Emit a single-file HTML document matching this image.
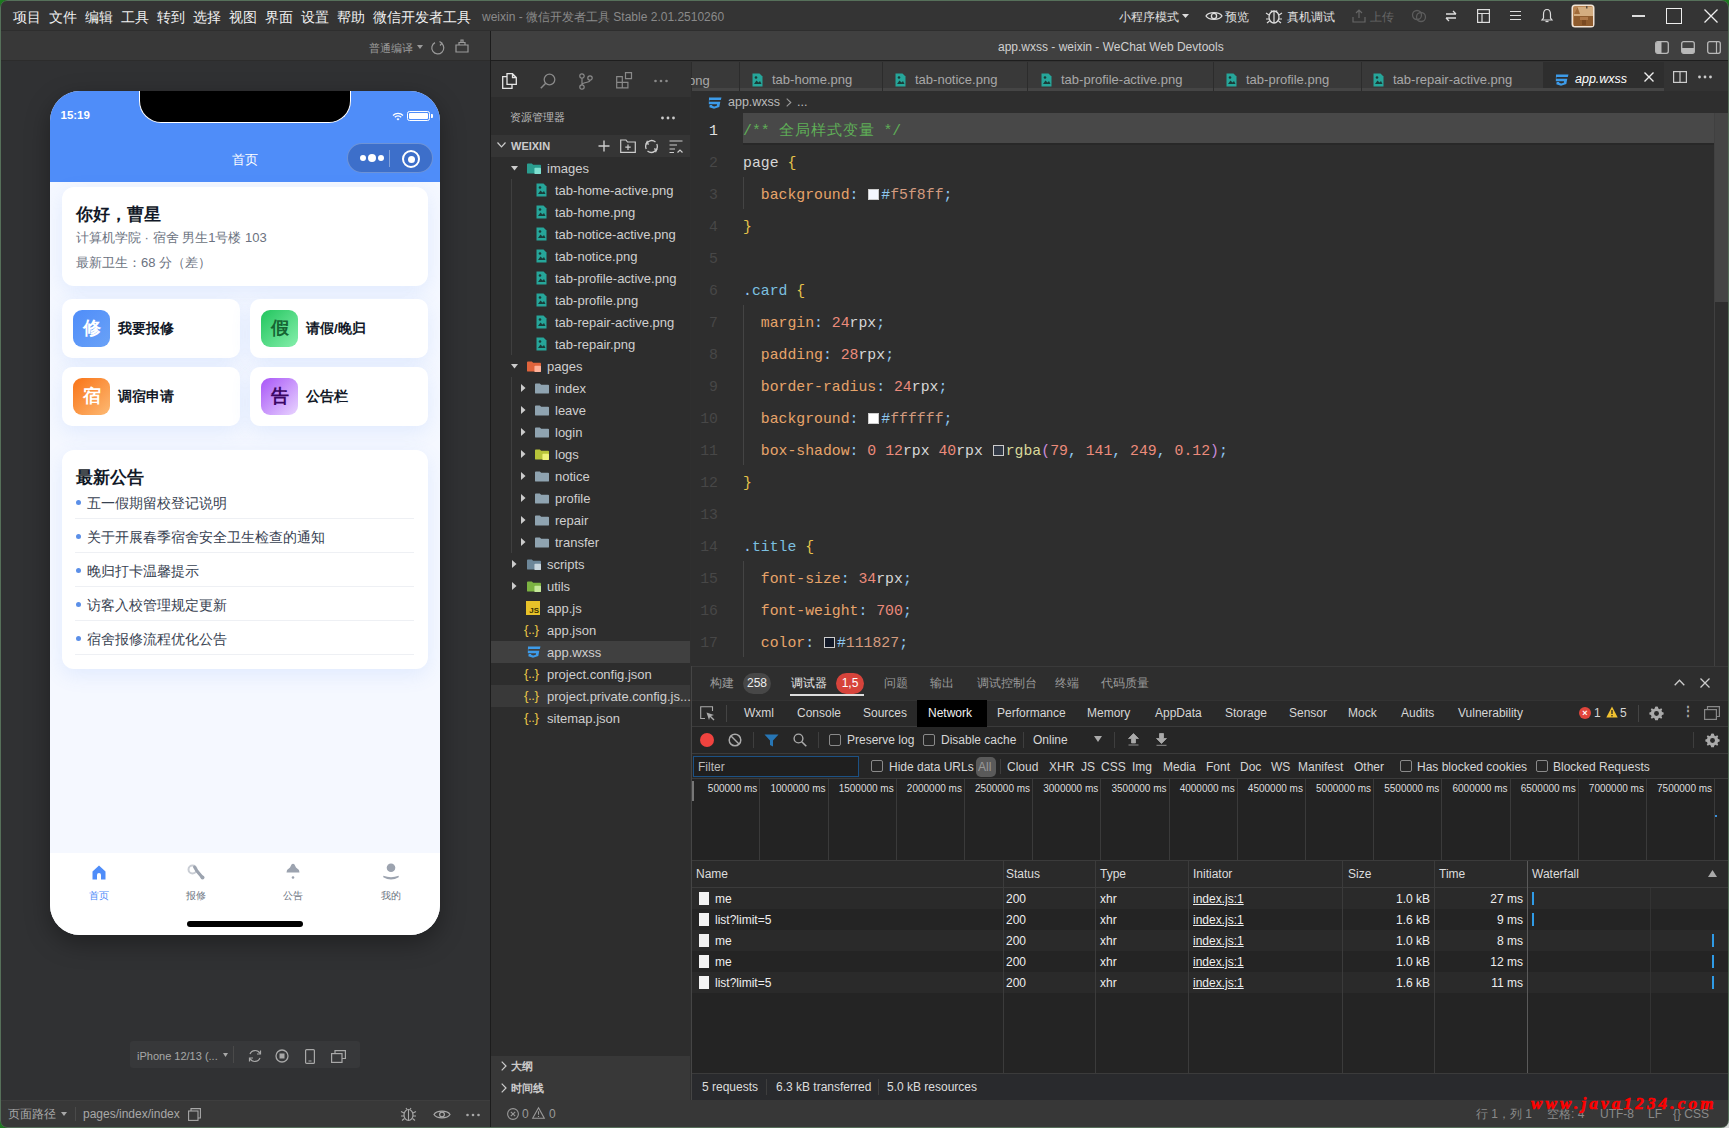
<!DOCTYPE html>
<html><head><meta charset="utf-8">
<style>
*{box-sizing:border-box;margin:0;padding:0}
html,body{width:1729px;height:1128px;overflow:hidden;background:#2f2f2f;font-family:"Liberation Sans",sans-serif;color:#ccc}
.a{position:absolute}
.t{position:absolute;white-space:nowrap;line-height:1}
svg{position:absolute;overflow:visible}
/* menu */
#menubar{left:0;top:0;width:1729px;height:31px;background:#343434;border-bottom:1px solid #2e2e2e}
.menu{top:10.5px;font-size:13.5px;color:#f0f0f0}
/* left sim */
#simtool{left:0;top:31px;width:490px;height:30px;background:#383838;border-bottom:1px solid #2c2c2c}
#simbg{left:0;top:61px;width:490px;height:1039px;background:#303133}
#vsep{left:490px;top:31px;width:1px;height:1097px;background:#1c1c1c}
/* right */
#titlebar{left:491px;top:31px;width:1238px;height:30px;background:#404040;border-bottom:1px solid #1e1e1e}
#actbar{left:491px;top:61px;width:200px;height:36px;background:#333}
#explorer{left:491px;top:97px;width:199px;height:1003px;background:#2d2d2d}
#tabsrow{left:691px;top:61px;width:1038px;height:30px;background:#333}
#editor{left:691px;top:91px;width:1038px;height:575px;background:#2e2e2e}
#devtools{left:691px;top:666px;width:1038px;height:434px;background:#242424}
#status{left:491px;top:1100px;width:1238px;height:28px;background:#373737}
.card{position:absolute;background:#fff;border-radius:12px;box-shadow:0 6px 20px rgba(79,141,249,0.12)}
.ico{width:37px;height:37px;border-radius:9px;color:#fff;font-size:18px;font-weight:bold;text-align:center;line-height:37px}
.qt{font-size:13.5px;font-weight:bold;color:#111827}
.nl{position:absolute;left:25px;width:339px;height:34px;font-size:14px;color:#374151;display:flex;align-items:center;border-bottom:1px solid #eef0f4;white-space:nowrap;padding-top:4px}
.nl i{display:inline-block;width:5px;height:5px;border-radius:3px;background:#5b8fe8;margin:-3px 6px 0 1px;flex:none}
.tl{font-size:10px;color:#6b7280}
.fn{font-size:13px;color:#cfcfcf}
.tabt{font-size:13px;color:#a8a8a8}
.ln{left:0;width:27px;text-align:right;font-family:"Liberation Mono",monospace;font-size:14.8px}
.code{left:52px;font-family:"Liberation Mono",monospace;font-size:14.8px;color:#d7d7d7;white-space:pre}
.sw{display:inline-block;width:11px;height:11px;border:1px solid #ccc;margin:0 2px 0 1px;vertical-align:-1px}
.dt{font-size:12px;color:#d6d6d6}
.cb{width:12px;height:12px;border:1px solid #8a8a8a;border-radius:2px}
.ovl{width:80px;text-align:right;font-size:10px;color:#dedede;padding-right:2px}
.cj{display:inline-block;white-space:nowrap}
</style></head><body>
<div id="menubar" class="a">
<div class="t menu" style="left:13px">项目</div>
<div class="t menu" style="left:49px">文件</div>
<div class="t menu" style="left:85px">编辑</div>
<div class="t menu" style="left:121px">工具</div>
<div class="t menu" style="left:157px">转到</div>
<div class="t menu" style="left:193px">选择</div>
<div class="t menu" style="left:229px">视图</div>
<div class="t menu" style="left:265px">界面</div>
<div class="t menu" style="left:301px">设置</div>
<div class="t menu" style="left:337px">帮助</div>
<div class="t menu" style="left:373px">微信开发者工具</div>
<div class="t" style="left:482px;top:10.5px;font-size:12px;color:#8a8a8a">weixin - <span class="cj" style="width:7em">微信开发者工具</span> Stable 2.01.2510260</div>
<div class="t" style="left:1119px;top:11px;font-size:12px;color:#e0e0e0">小程序模式</div>
<svg style="left:1182px;top:14px" width="8" height="5"><path d="M0 0H7L3.5 4Z" fill="#ddd"/></svg>
<svg style="left:1205px;top:9px" width="18" height="14" viewBox="0 0 18 14"><path d="M1 7C3.5 2.5 14.5 2.5 17 7C14.5 11.5 3.5 11.5 1 7Z" fill="none" stroke="#ddd" stroke-width="1.3"/><circle cx="9" cy="7" r="2.6" fill="none" stroke="#ddd" stroke-width="1.3"/></svg>
<div class="t" style="left:1225px;top:11px;font-size:12px;color:#e0e0e0">预览</div>
<svg style="left:1265px;top:8px" width="18" height="16" viewBox="0 0 18 16"><ellipse cx="9" cy="9" rx="5" ry="6" fill="none" stroke="#ddd" stroke-width="1.3"/><path d="M9 3V15M1 5L4 7M17 5L14 7M1 11H4M17 11H14M2 15L4.5 13M16 15L13.5 13M6 2.5L7 4M12 2.5L11 4" stroke="#ddd" stroke-width="1.2"/></svg>
<div class="t" style="left:1287px;top:11px;font-size:12px;color:#e0e0e0">真机调试</div>
<svg style="left:1352px;top:9px" width="14" height="14" viewBox="0 0 14 14"><path d="M7 1V9M4 4L7 1L10 4M1 8V13H13V8" fill="none" stroke="#666" stroke-width="1.2"/></svg>
<div class="t" style="left:1370px;top:11px;font-size:12px;color:#666">上传</div>
<svg style="left:1411px;top:10px" width="16" height="12" viewBox="0 0 16 12"><circle cx="6" cy="5" r="4.5" fill="none" stroke="#5c5c5c" stroke-width="1.3"/><circle cx="10" cy="7" r="4.5" fill="none" stroke="#5c5c5c" stroke-width="1.3"/></svg>
<svg style="left:1445px;top:10px" width="12" height="12" viewBox="0 0 12 12"><path d="M1 4H11M8 1L11 4M11 8H1M4 11L1 8" fill="none" stroke="#ddd" stroke-width="1.3"/></svg>
<svg style="left:1477px;top:9px" width="13" height="14" viewBox="0 0 13 14"><rect x="0.6" y="0.6" width="11.8" height="12.8" fill="none" stroke="#ddd" stroke-width="1.2"/><path d="M0.6 4.5H12.4M5 4.5V13.4" stroke="#ddd" stroke-width="1.2"/></svg>
<svg style="left:1510px;top:10px" width="11" height="11" viewBox="0 0 11 11"><path d="M0 1.5H11M0 5.5H11M0 9.5H11" stroke="#ddd" stroke-width="1.2"/></svg>
<svg style="left:1541px;top:8px" width="12" height="15" viewBox="0 0 12 15"><path d="M6 1.5C3 1.5 2.5 4 2.5 6.5V10L1 12H11L9.5 10V6.5C9.5 4 9 1.5 6 1.5Z" fill="none" stroke="#ddd" stroke-width="1.2"/><path d="M4.5 13.5H7.5" stroke="#ddd" stroke-width="1.3"/></svg>
<svg style="left:1571px;top:4px" width="24" height="24" viewBox="0 0 24 24"><rect x="0.5" y="0.5" width="23" height="23" rx="3.5" fill="#f2e4d6"/><rect x="2" y="2" width="20" height="20" rx="2" fill="#b98452"/><path d="M3 10L6.5 3H22V12H3Z" fill="#d4ad80"/><path d="M3 10L6.5 3L9 10Z" fill="#a06a38"/><rect x="15" y="2" width="1.5" height="2.5" fill="#5a4a3a"/><rect x="3" y="12" width="19" height="10" fill="#8f5c2e"/><rect x="9" y="13" width="8" height="3" fill="#b07a4a"/><rect x="11" y="16" width="4" height="5" fill="#7a4a22"/></svg>
<div class="a" style="left:1632px;top:15px;width:13px;height:1.5px;background:#ddd"></div>
<div class="a" style="left:1666px;top:8px;width:16px;height:16px;border:1.5px solid #eee"></div>
<svg style="left:1704px;top:9px" width="14" height="14" viewBox="0 0 14 14"><path d="M0.5 0.5L13.5 13.5M13.5 0.5L0.5 13.5" stroke="#eee" stroke-width="1.3"/></svg>
</div>
<div id="simtool" class="a">
<div class="t" style="left:369px;top:11.5px;font-size:11px;color:#9a9a9a">普通编译</div>
<svg style="left:417px;top:14px" width="6" height="4"><path d="M0 0H6L3 4Z" fill="#9a9a9a"/></svg>
<svg style="left:431px;top:10px" width="14" height="14" viewBox="0 0 14 14"><path d="M10.5 2.2A6 6 0 1 1 4 1.6" fill="none" stroke="#9a9a9a" stroke-width="1.2"/><path d="M8.5 0.5L11 2.2L9 4.5" fill="none" stroke="#9a9a9a" stroke-width="1.2"/></svg>
<svg style="left:455px;top:8px" width="14" height="14" viewBox="0 0 14 14"><path d="M1 6H13V13H1Z M4 6V3.5H10V6 M6 3.5V1H8V3.5" fill="none" stroke="#9a9a9a" stroke-width="1.2"/></svg>
</div>
<div id="simbg" class="a"></div>
<div class="a" style="left:50px;top:91px;width:390px;height:844px;border-radius:30px;background:#f5f8ff;overflow:hidden;box-shadow:0 8px 24px rgba(0,0,0,0.35)">
  <div class="a" style="left:0;top:0;width:390px;height:91px;background:#4f8df9"></div>
  <div class="a" style="left:89px;top:-1px;width:212px;height:33px;background:#000;border:1px solid #fff;border-top:none;border-radius:0 0 22px 22px"></div>
  <div class="t" style="left:10.5px;top:18.5px;font-size:11.5px;font-weight:bold;color:#fff">15:19</div>
  <svg style="left:342px;top:21px" width="12" height="9" viewBox="0 0 12 9"><path d="M1 3.5A7 7 0 0 1 11 3.5M2.8 5.3A4.5 4.5 0 0 1 9.2 5.3" fill="none" stroke="#fff" stroke-width="1.3"/><path d="M4.5 7L6 8.6L7.5 7A2.2 2.2 0 0 0 4.5 7Z" fill="#fff"/></svg>
  <div class="a" style="left:357px;top:20px;width:23px;height:10px;border:1.3px solid #fff;border-radius:2.5px;padding:1px"><div style="width:100%;height:100%;background:#fff;border-radius:1px"></div></div>
  <div class="a" style="left:381px;top:23px;width:2px;height:4px;background:#fff;border-radius:0 1px 1px 0"></div>
  <div class="t" style="left:182px;top:62px;font-size:13px;color:#fff">首页</div>
  <div class="a" style="left:297px;top:52px;width:86px;height:30px;border-radius:15px;background:#3d6fca;border:1px solid rgba(255,255,255,0.25)"></div>
  <div class="a" style="left:339px;top:59px;width:1px;height:17px;background:rgba(255,255,255,0.35)"></div>
  <div class="a" style="left:310px;top:64px;width:6px;height:6px;border-radius:3px;background:#fff"></div>
  <div class="a" style="left:318px;top:63px;width:8px;height:8px;border-radius:4px;background:#fff"></div>
  <div class="a" style="left:328px;top:64px;width:6px;height:6px;border-radius:3px;background:#fff"></div>
  <div class="a" style="left:352px;top:59px;width:18px;height:18px;border-radius:9px;border:2px solid #fff"></div>
  <div class="a" style="left:357.5px;top:64.5px;width:7px;height:7px;border-radius:4px;background:#fff"></div>

  <div class="a card" style="left:12px;top:96px;width:366px;height:99px"></div>
  <div class="t" style="left:26px;top:115px;font-size:16.5px;font-weight:bold;color:#111827">你好，曹星</div>
  <div class="t" style="left:26px;top:140px;font-size:13px;color:#6b7280"><span class="cj" style="width:5em">计算机学院</span> · <span class="cj" style="width:2em">宿舍</span> <span class="cj" style="width:2em">男生</span>1<span class="cj" style="width:2em">号楼</span> 103</div>
  <div class="t" style="left:26px;top:165px;font-size:13px;color:#6b7280"><span class="cj" style="width:5em">最新卫生：</span>68 <span class="cj" style="width:4em">分（差）</span></div>

  <div class="a card" style="left:12px;top:208px;width:178px;height:59px;border-radius:10px"></div>
  <div class="a card" style="left:200px;top:208px;width:178px;height:59px;border-radius:10px"></div>
  <div class="a card" style="left:12px;top:276px;width:178px;height:59px;border-radius:10px"></div>
  <div class="a card" style="left:200px;top:276px;width:178px;height:59px;border-radius:10px"></div>
  <div class="a ico" style="left:23px;top:219px;background:linear-gradient(135deg,#4f8df9,#6aa2f7)">修</div>
  <div class="a ico" style="left:211px;top:219px;background:linear-gradient(135deg,#22c55e,#86efac);color:#166534">假</div>
  <div class="a ico" style="left:23px;top:287px;background:linear-gradient(135deg,#f97316,#fdba74)">宿</div>
  <div class="a ico" style="left:211px;top:287px;background:linear-gradient(135deg,#a855f7,#e9d5ff);color:#3b0764">告</div>
  <div class="t qt" style="left:68px;top:231px">我要报修</div>
  <div class="t qt" style="left:256px;top:231px"><span class="cj" style="width:28px">请假</span>/<span class="cj" style="width:28px">晚归</span></div>
  <div class="t qt" style="left:68px;top:299px">调宿申请</div>
  <div class="t qt" style="left:256px;top:299px">公告栏</div>

  <div class="a card" style="left:12px;top:359px;width:366px;height:219px"></div>
  <div class="t" style="left:26px;top:378px;font-size:16.5px;font-weight:bold;color:#111827">最新公告</div>
  <div class="nl" style="top:394px"><i></i>五一假期留校登记说明</div>
  <div class="nl" style="top:428px"><i></i>关于开展春季宿舍安全卫生检查的通知</div>
  <div class="nl" style="top:462px"><i></i>晚归打卡温馨提示</div>
  <div class="nl" style="top:496px"><i></i>访客入校管理规定更新</div>
  <div class="nl" style="top:530px"><i></i>宿舍报修流程优化公告</div>

  <div class="a" style="left:0;top:762px;width:390px;height:82px;background:#fff"></div>
  <svg style="left:42px;top:774px" width="14" height="15" viewBox="0 0 14 15"><path d="M7 0.5L13.5 6.5V14.5H9V10A2 2 0 0 0 5 10V14.5H0.5V6.5Z" fill="#4f8df9"/></svg>
  <svg style="left:137px;top:773px" width="18" height="16" viewBox="0 0 18 16"><circle cx="5.5" cy="5.5" r="4" fill="none" stroke="#c9cdd4" stroke-width="2"/><path d="M7.5 3L10 7L15 13" fill="none" stroke="#9ca3af" stroke-width="3" stroke-linecap="round"/><circle cx="15.5" cy="13.5" r="2" fill="#9ca3af"/></svg>
  <svg style="left:236px;top:772px" width="14" height="17" viewBox="0 0 14 17"><path d="M5.5 1.5Q7 0 8.5 1.5L10 4.5Q13 6 13.5 9.5H0.5Q1 6 4 4.5Z" fill="#9ca3af"/><circle cx="7" cy="14.5" r="1.3" fill="#9ca3af"/></svg>
  <svg style="left:333px;top:772px" width="16" height="18" viewBox="0 0 16 18"><circle cx="8" cy="4.8" r="4.3" fill="#9ca3af"/><path d="M0.3 12.8Q8 15.5 15.7 12.8V14.3Q8 18.8 0.3 14.3Z" fill="#9ca3af"/></svg>
  <div class="t tl" style="left:39px;top:800px;color:#4f8df9">首页</div>
  <div class="t tl" style="left:136px;top:800px">报修</div>
  <div class="t tl" style="left:233px;top:800px">公告</div>
  <div class="t tl" style="left:331px;top:800px">我的</div>
  <div class="a" style="left:137px;top:830px;width:116px;height:5.5px;border-radius:3px;background:#000"></div>
</div>
<div class="a" style="left:130px;top:1041px;width:230px;height:27px;background:#37383a;border-radius:3px"></div>
<div class="t" style="left:137px;top:1051px;font-size:11px;color:#a8a8a8">iPhone 12/13 (...</div>
<svg style="left:223px;top:1053px" width="5" height="5"><path d="M0 0H5L2.5 4Z" fill="#a8a8a8"/></svg>
<div class="a" style="left:233px;top:1046px;width:1px;height:17px;background:#4a4a4a"></div>
<svg style="left:248px;top:1049px" width="14" height="14" viewBox="0 0 14 14"><path d="M12 4.5A5.5 5.5 0 0 0 2 5M2 9.5A5.5 5.5 0 0 0 12 9" fill="none" stroke="#a8a8a8" stroke-width="1.2"/><path d="M12.5 1.5V5H9M1.5 12.5V9H5" fill="none" stroke="#a8a8a8" stroke-width="1.2"/></svg>
<svg style="left:275px;top:1049px" width="14" height="14" viewBox="0 0 14 14"><circle cx="7" cy="7" r="6" fill="none" stroke="#a8a8a8" stroke-width="1.3"/><rect x="4.5" y="4.5" width="5" height="5" fill="#a8a8a8"/></svg>
<svg style="left:305px;top:1049px" width="10" height="15" viewBox="0 0 10 15"><rect x="0.6" y="0.6" width="8.8" height="13.8" rx="1" fill="none" stroke="#a8a8a8" stroke-width="1.2"/><path d="M3.5 12H6.5" stroke="#a8a8a8"/></svg>
<svg style="left:331px;top:1050px" width="15" height="13" viewBox="0 0 15 13"><path d="M4 3V0.6H14.4V8.5H11" fill="none" stroke="#a8a8a8" stroke-width="1.2"/><rect x="0.6" y="3.6" width="10.4" height="8.8" fill="none" stroke="#a8a8a8" stroke-width="1.2"/></svg>
<div class="a" style="left:0;top:1100px;width:490px;height:28px;background:#383838;border-top:1px solid #3e3e3e"></div>
<div class="t" style="left:8px;top:1108px;font-size:12px;color:#a8a8a8">页面路径</div>
<svg style="left:61px;top:1112px" width="6" height="4"><path d="M0 0H6L3 4Z" fill="#a8a8a8"/></svg>
<div class="a" style="left:75px;top:1107px;width:1px;height:14px;background:#4a4a4a"></div>
<div class="t" style="left:83px;top:1108px;font-size:12px;color:#a8a8a8">pages/index/index</div>
<svg style="left:188px;top:1108px" width="13" height="13" viewBox="0 0 13 13"><path d="M3 3V0.6H12.4V10H10" fill="none" stroke="#a8a8a8" stroke-width="1.1"/><rect x="0.6" y="3" width="9.4" height="9.4" fill="none" stroke="#a8a8a8" stroke-width="1.1"/></svg>
<svg style="left:400px;top:1106px" width="17" height="16" viewBox="0 0 17 16"><ellipse cx="8.5" cy="9" rx="4.5" ry="5.5" fill="none" stroke="#a8a8a8" stroke-width="1.2"/><path d="M8.5 3.5V14.5M1 5.5L4 7M16 5.5L13 7M1 10H4M16 10H13M2 14.5L4.5 12.5M15 14.5L12.5 12.5M6 2L7 3.5M11 2L10 3.5" stroke="#a8a8a8" stroke-width="1.1"/></svg>
<svg style="left:433px;top:1109px" width="18" height="11" viewBox="0 0 18 11"><path d="M1 5.5C3.5 1 14.5 1 17 5.5C14.5 10 3.5 10 1 5.5Z" fill="none" stroke="#a8a8a8" stroke-width="1.2"/><circle cx="9" cy="5.5" r="2.4" fill="none" stroke="#a8a8a8" stroke-width="1.2"/></svg>
<svg style="left:466px;top:1113px" width="16" height="4" viewBox="0 0 16 4"><circle cx="1.5" cy="2" r="1.3" fill="#a8a8a8"/><circle cx="7.0" cy="2" r="1.3" fill="#a8a8a8"/><circle cx="12.5" cy="2" r="1.3" fill="#a8a8a8"/></svg>
<div id="vsep" class="a"></div>
<div id="titlebar" class="a">
<div class="t" style="left:507px;top:10px;font-size:12px;color:#d0d0d0">app.wxss - weixin - WeChat Web Devtools</div>
<svg style="left:1164px;top:10px" width="14" height="13" viewBox="0 0 14 13"><rect x="0.7" y="0.7" width="12.6" height="11.6" rx="2" fill="none" stroke="#b8b8b8" stroke-width="1.3"/><path d="M1 2.5Q1 1 2.5 1H6.5V12H2.5Q1 12 1 10.5Z" fill="#b8b8b8"/></svg>
<svg style="left:1190px;top:10px" width="14" height="13" viewBox="0 0 14 13"><rect x="0.7" y="0.7" width="12.6" height="11.6" rx="2" fill="none" stroke="#b8b8b8" stroke-width="1.3"/><path d="M1 7H13V10.5Q13 12 11.5 12H2.5Q1 12 1 10.5Z" fill="#b8b8b8"/></svg>
<svg style="left:1216px;top:10px" width="14" height="13" viewBox="0 0 14 13"><rect x="0.7" y="0.7" width="12.6" height="11.6" rx="2" fill="none" stroke="#b8b8b8" stroke-width="1.3"/><path d="M9.5 1V12" stroke="#b8b8b8" stroke-width="1.2"/></svg>
</div>
<div id="actbar" class="a">
<svg style="left:11px;top:12px" width="15" height="16" viewBox="0 0 15 16"><path d="M5 0.7H10.5L14.3 4.5V11.3H5Z M10.5 0.7V4.5H14.3" fill="none" stroke="#e6e6e6" stroke-width="1.3"/><path d="M5 3.7H0.7V15.3H10V11.3" fill="none" stroke="#e6e6e6" stroke-width="1.3"/></svg>
<svg style="left:49px;top:12px" width="16" height="16" viewBox="0 0 16 16"><circle cx="9.5" cy="6.5" r="5.3" fill="none" stroke="#8a8a8a" stroke-width="1.3"/><path d="M5.7 10.3L0.8 15.2" stroke="#8a8a8a" stroke-width="1.5"/></svg>
<svg style="left:88px;top:12px" width="14" height="17" viewBox="0 0 14 17"><circle cx="3" cy="3" r="2.2" fill="none" stroke="#8a8a8a" stroke-width="1.2"/><circle cx="3" cy="14" r="2.2" fill="none" stroke="#8a8a8a" stroke-width="1.2"/><circle cx="11" cy="5" r="2.2" fill="none" stroke="#8a8a8a" stroke-width="1.2"/><path d="M3 5.2V11.8M11 7.2C11 10 3 9 3 11.8" fill="none" stroke="#8a8a8a" stroke-width="1.2"/></svg>
<svg style="left:125px;top:11px" width="17" height="17" viewBox="0 0 17 17"><path d="M0.7 4.7H6.3V10.3H0.7Z M0.7 10.3H6.3V15.9H0.7Z M6.3 10.3H11.9V15.9H6.3Z M9.5 0.7H15.5V6.7H9.5Z" fill="none" stroke="#8a8a8a" stroke-width="1.2"/></svg>
<svg style="left:163px;top:18px" width="16" height="4" viewBox="0 0 16 4"><circle cx="1.5" cy="2" r="1.3" fill="#8a8a8a"/><circle cx="7.0" cy="2" r="1.3" fill="#8a8a8a"/><circle cx="12.5" cy="2" r="1.3" fill="#8a8a8a"/></svg>
</div>
<div id="explorer" class="a">
<div class="t" style="left:19px;top:15px;font-size:11px;color:#bbb">资源管理器</div>
<svg style="left:170px;top:19px" width="16" height="4" viewBox="0 0 16 4"><circle cx="1.5" cy="2" r="1.4" fill="#cccccc"/><circle cx="7.0" cy="2" r="1.4" fill="#cccccc"/><circle cx="12.5" cy="2" r="1.4" fill="#cccccc"/></svg>
<div class="a" style="left:0;top:38px;width:199px;height:22px;background:#353535"></div>
<svg style="left:6px;top:45px" width="9" height="6" viewBox="0 0 9 6"><path d="M0.5 0.5L4.5 4.8L8.5 0.5" fill="none" stroke="#ccc" stroke-width="1.2"/></svg>
<div class="t" style="left:20px;top:44px;font-size:11px;font-weight:bold;color:#ccc">WEIXIN</div>
<svg style="left:107px;top:43px" width="12" height="12" viewBox="0 0 12 12"><path d="M6 0.5V11.5M0.5 6H11.5" stroke="#ccc" stroke-width="1.4"/></svg>
<svg style="left:129px;top:42px" width="16" height="14" viewBox="0 0 16 14"><path d="M0.7 1H6L7.5 3H15.3V13.3H0.7Z" fill="none" stroke="#ccc" stroke-width="1.2"/><path d="M8 5.5V11M5.3 8.2H10.7" stroke="#ccc" stroke-width="1.2"/></svg>
<svg style="left:153px;top:42px" width="15" height="15" viewBox="0 0 15 15"><path d="M11.5 3A6 6 0 0 0 2.2 10M3.5 12A6 6 0 0 0 12.8 5" fill="none" stroke="#ccc" stroke-width="1.3"/><path d="M3.5 1.8L2.2 4.5L5 5.2M11.5 13.2L12.8 10.5L10 9.8" fill="none" stroke="#ccc" stroke-width="1.2"/></svg>
<svg style="left:178px;top:43px" width="14" height="13" viewBox="0 0 14 13"><path d="M0.5 1H13.5M0.5 5H8M0.5 9H6M0.5 12.5H5" stroke="#ccc" stroke-width="1.2"/><path d="M8.5 12.5L11 10L13.5 12.5" fill="none" stroke="#ccc" stroke-width="1.2"/></svg>

<div class="a" style="left:20px;top:280px;width:1px;height:176px;background:#3f3f3f"></div>
<div class="a" style="left:20px;top:82px;width:1px;height:176px;background:#3f3f3f"></div>
<svg style="left:20px;top:69px" width="7" height="5"><path d="M0 0H7L3.5 4.5Z" fill="#ccc"/></svg>
<svg style="left:36px;top:66px" width="14" height="11" viewBox="0 0 16 13" preserveAspectRatio="none"><path d="M0 1.5Q0 0.5 1 0.5H5.5L7 2H15Q16 2 16 3V11.5Q16 12.5 15 12.5H1Q0 12.5 0 11.5Z" fill="#2a9d8f"/><rect x="8.5" y="5.5" width="7.5" height="7.5" rx="1" fill="#7ee0d0"/></svg>
<div class="t fn" style="left:56px;top:65px">images</div>
<svg style="left:45px;top:86px" width="11" height="14" viewBox="0 0 11 14"><path d="M0.5 0.5H7.5L10.5 3.5V13.5H0.5Z" fill="#26a69a"/><path d="M2 11L4.5 7.5L6.5 9.5L8 8L9.5 11Z" fill="#1b3b38"/><circle cx="4" cy="4.5" r="1.3" fill="#1b3b38"/></svg>
<div class="t fn" style="left:64px;top:87px">tab-home-active.png</div>
<svg style="left:45px;top:108px" width="11" height="14" viewBox="0 0 11 14"><path d="M0.5 0.5H7.5L10.5 3.5V13.5H0.5Z" fill="#26a69a"/><path d="M2 11L4.5 7.5L6.5 9.5L8 8L9.5 11Z" fill="#1b3b38"/><circle cx="4" cy="4.5" r="1.3" fill="#1b3b38"/></svg>
<div class="t fn" style="left:64px;top:109px">tab-home.png</div>
<svg style="left:45px;top:130px" width="11" height="14" viewBox="0 0 11 14"><path d="M0.5 0.5H7.5L10.5 3.5V13.5H0.5Z" fill="#26a69a"/><path d="M2 11L4.5 7.5L6.5 9.5L8 8L9.5 11Z" fill="#1b3b38"/><circle cx="4" cy="4.5" r="1.3" fill="#1b3b38"/></svg>
<div class="t fn" style="left:64px;top:131px">tab-notice-active.png</div>
<svg style="left:45px;top:152px" width="11" height="14" viewBox="0 0 11 14"><path d="M0.5 0.5H7.5L10.5 3.5V13.5H0.5Z" fill="#26a69a"/><path d="M2 11L4.5 7.5L6.5 9.5L8 8L9.5 11Z" fill="#1b3b38"/><circle cx="4" cy="4.5" r="1.3" fill="#1b3b38"/></svg>
<div class="t fn" style="left:64px;top:153px">tab-notice.png</div>
<svg style="left:45px;top:174px" width="11" height="14" viewBox="0 0 11 14"><path d="M0.5 0.5H7.5L10.5 3.5V13.5H0.5Z" fill="#26a69a"/><path d="M2 11L4.5 7.5L6.5 9.5L8 8L9.5 11Z" fill="#1b3b38"/><circle cx="4" cy="4.5" r="1.3" fill="#1b3b38"/></svg>
<div class="t fn" style="left:64px;top:175px">tab-profile-active.png</div>
<svg style="left:45px;top:196px" width="11" height="14" viewBox="0 0 11 14"><path d="M0.5 0.5H7.5L10.5 3.5V13.5H0.5Z" fill="#26a69a"/><path d="M2 11L4.5 7.5L6.5 9.5L8 8L9.5 11Z" fill="#1b3b38"/><circle cx="4" cy="4.5" r="1.3" fill="#1b3b38"/></svg>
<div class="t fn" style="left:64px;top:197px">tab-profile.png</div>
<svg style="left:45px;top:218px" width="11" height="14" viewBox="0 0 11 14"><path d="M0.5 0.5H7.5L10.5 3.5V13.5H0.5Z" fill="#26a69a"/><path d="M2 11L4.5 7.5L6.5 9.5L8 8L9.5 11Z" fill="#1b3b38"/><circle cx="4" cy="4.5" r="1.3" fill="#1b3b38"/></svg>
<div class="t fn" style="left:64px;top:219px">tab-repair-active.png</div>
<svg style="left:45px;top:240px" width="11" height="14" viewBox="0 0 11 14"><path d="M0.5 0.5H7.5L10.5 3.5V13.5H0.5Z" fill="#26a69a"/><path d="M2 11L4.5 7.5L6.5 9.5L8 8L9.5 11Z" fill="#1b3b38"/><circle cx="4" cy="4.5" r="1.3" fill="#1b3b38"/></svg>
<div class="t fn" style="left:64px;top:241px">tab-repair.png</div>
<svg style="left:20px;top:267px" width="7" height="5"><path d="M0 0H7L3.5 4.5Z" fill="#ccc"/></svg>
<svg style="left:36px;top:264px" width="14" height="11" viewBox="0 0 16 13" preserveAspectRatio="none"><path d="M0 1.5Q0 0.5 1 0.5H5.5L7 2H15Q16 2 16 3V11.5Q16 12.5 15 12.5H1Q0 12.5 0 11.5Z" fill="#e0643c"/><rect x="8.5" y="5.5" width="7.5" height="7.5" rx="1" fill="#ffb199"/></svg>
<div class="t fn" style="left:56px;top:263px">pages</div>
<svg style="left:30px;top:287px" width="5" height="8"><path d="M0 0V8L4.5 4Z" fill="#ccc"/></svg>
<svg style="left:44px;top:286px" width="14" height="11" viewBox="0 0 16 13" preserveAspectRatio="none"><path d="M0 1.5Q0 0.5 1 0.5H5.5L7 2H15Q16 2 16 3V11.5Q16 12.5 15 12.5H1Q0 12.5 0 11.5Z" fill="#8fa3b0"/></svg>
<div class="t fn" style="left:64px;top:285px">index</div>
<svg style="left:30px;top:309px" width="5" height="8"><path d="M0 0V8L4.5 4Z" fill="#ccc"/></svg>
<svg style="left:44px;top:308px" width="14" height="11" viewBox="0 0 16 13" preserveAspectRatio="none"><path d="M0 1.5Q0 0.5 1 0.5H5.5L7 2H15Q16 2 16 3V11.5Q16 12.5 15 12.5H1Q0 12.5 0 11.5Z" fill="#8fa3b0"/></svg>
<div class="t fn" style="left:64px;top:307px">leave</div>
<svg style="left:30px;top:331px" width="5" height="8"><path d="M0 0V8L4.5 4Z" fill="#ccc"/></svg>
<svg style="left:44px;top:330px" width="14" height="11" viewBox="0 0 16 13" preserveAspectRatio="none"><path d="M0 1.5Q0 0.5 1 0.5H5.5L7 2H15Q16 2 16 3V11.5Q16 12.5 15 12.5H1Q0 12.5 0 11.5Z" fill="#8fa3b0"/></svg>
<div class="t fn" style="left:64px;top:329px">login</div>
<svg style="left:30px;top:353px" width="5" height="8"><path d="M0 0V8L4.5 4Z" fill="#ccc"/></svg>
<svg style="left:44px;top:352px" width="14" height="11" viewBox="0 0 16 13" preserveAspectRatio="none"><path d="M0 1.5Q0 0.5 1 0.5H5.5L7 2H15Q16 2 16 3V11.5Q16 12.5 15 12.5H1Q0 12.5 0 11.5Z" fill="#b8c43a"/><rect x="8.5" y="5.5" width="7.5" height="7.5" rx="1" fill="#eef27a"/></svg>
<div class="t fn" style="left:64px;top:351px">logs</div>
<svg style="left:30px;top:375px" width="5" height="8"><path d="M0 0V8L4.5 4Z" fill="#ccc"/></svg>
<svg style="left:44px;top:374px" width="14" height="11" viewBox="0 0 16 13" preserveAspectRatio="none"><path d="M0 1.5Q0 0.5 1 0.5H5.5L7 2H15Q16 2 16 3V11.5Q16 12.5 15 12.5H1Q0 12.5 0 11.5Z" fill="#8fa3b0"/></svg>
<div class="t fn" style="left:64px;top:373px">notice</div>
<svg style="left:30px;top:397px" width="5" height="8"><path d="M0 0V8L4.5 4Z" fill="#ccc"/></svg>
<svg style="left:44px;top:396px" width="14" height="11" viewBox="0 0 16 13" preserveAspectRatio="none"><path d="M0 1.5Q0 0.5 1 0.5H5.5L7 2H15Q16 2 16 3V11.5Q16 12.5 15 12.5H1Q0 12.5 0 11.5Z" fill="#8fa3b0"/></svg>
<div class="t fn" style="left:64px;top:395px">profile</div>
<svg style="left:30px;top:419px" width="5" height="8"><path d="M0 0V8L4.5 4Z" fill="#ccc"/></svg>
<svg style="left:44px;top:418px" width="14" height="11" viewBox="0 0 16 13" preserveAspectRatio="none"><path d="M0 1.5Q0 0.5 1 0.5H5.5L7 2H15Q16 2 16 3V11.5Q16 12.5 15 12.5H1Q0 12.5 0 11.5Z" fill="#8fa3b0"/></svg>
<div class="t fn" style="left:64px;top:417px">repair</div>
<svg style="left:30px;top:441px" width="5" height="8"><path d="M0 0V8L4.5 4Z" fill="#ccc"/></svg>
<svg style="left:44px;top:440px" width="14" height="11" viewBox="0 0 16 13" preserveAspectRatio="none"><path d="M0 1.5Q0 0.5 1 0.5H5.5L7 2H15Q16 2 16 3V11.5Q16 12.5 15 12.5H1Q0 12.5 0 11.5Z" fill="#8fa3b0"/></svg>
<div class="t fn" style="left:64px;top:439px">transfer</div>
<svg style="left:21px;top:463px" width="5" height="8"><path d="M0 0V8L4.5 4Z" fill="#ccc"/></svg>
<svg style="left:36px;top:462px" width="14" height="11" viewBox="0 0 16 13" preserveAspectRatio="none"><path d="M0 1.5Q0 0.5 1 0.5H5.5L7 2H15Q16 2 16 3V11.5Q16 12.5 15 12.5H1Q0 12.5 0 11.5Z" fill="#6d8799"/><rect x="8.5" y="5.5" width="7.5" height="7.5" rx="1" fill="#c9d6de"/></svg>
<div class="t fn" style="left:56px;top:461px">scripts</div>
<svg style="left:21px;top:485px" width="5" height="8"><path d="M0 0V8L4.5 4Z" fill="#ccc"/></svg>
<svg style="left:36px;top:484px" width="14" height="11" viewBox="0 0 16 13" preserveAspectRatio="none"><path d="M0 1.5Q0 0.5 1 0.5H5.5L7 2H15Q16 2 16 3V11.5Q16 12.5 15 12.5H1Q0 12.5 0 11.5Z" fill="#7cb342"/><rect x="8.5" y="5.5" width="7.5" height="7.5" rx="1" fill="#c5e89a"/></svg>
<div class="t fn" style="left:56px;top:483px">utils</div>
<div class="a" style="left:35px;top:504px;width:14px;height:14px;background:#e8c229;color:#3a3000;font-size:8px;font-weight:bold;line-height:19px;text-align:right;padding-right:1px">JS</div>
<div class="t fn" style="left:56px;top:505px">app.js</div>
<div class="t" style="left:33px;top:526px;font-size:13.5px;color:#e8c547;letter-spacing:-0.5px">{..}</div>
<div class="t fn" style="left:56px;top:527px">app.json</div>
<div class="a" style="left:0;top:544px;width:199px;height:22px;background:#404040"></div>
<svg style="left:36px;top:549px" width="14" height="12" viewBox="0 0 14 12"><path d="M1 0.5H13.5L12.8 3H1.5L1.2 4.8H12.3L11.3 10L6 11.8L1.3 10.2L1.7 8H4.3L4.1 8.8L6.3 9.5L8.8 8.8L9.1 7.3H0.8Z" fill="#3d9be9"/></svg>
<div class="t fn" style="left:56px;top:549px">app.wxss</div>
<div class="t" style="left:33px;top:570px;font-size:13.5px;color:#e8c547;letter-spacing:-0.5px">{..}</div>
<div class="t fn" style="left:56px;top:571px">project.config.json</div>
<div class="a" style="left:0;top:588px;width:199px;height:22px;background:#393939"></div>
<div class="t" style="left:33px;top:592px;font-size:13.5px;color:#e8c547;letter-spacing:-0.5px">{..}</div>
<div class="t fn" style="left:56px;top:593px">project.private.config.js...</div>
<div class="t" style="left:33px;top:614px;font-size:13.5px;color:#e8c547;letter-spacing:-0.5px">{..}</div>
<div class="t fn" style="left:56px;top:615px">sitemap.json</div>
<div class="a" style="left:0;top:959px;width:199px;height:44px;background:#383838"></div>
<svg style="left:10px;top:964px" width="6" height="10" viewBox="0 0 6 10"><path d="M0.7 0.7L5 5L0.7 9.3" fill="none" stroke="#ccc" stroke-width="1.2"/></svg>
<div class="t" style="left:20px;top:964px;font-size:11px;font-weight:bold;color:#ccc">大纲</div>
<svg style="left:10px;top:986px" width="6" height="10" viewBox="0 0 6 10"><path d="M0.7 0.7L5 5L0.7 9.3" fill="none" stroke="#ccc" stroke-width="1.2"/></svg>
<div class="t" style="left:20px;top:986px;font-size:11px;font-weight:bold;color:#ccc">时间线</div>
</div>

<div id="tabsrow" class="a"><div class="a" style="left:0px;top:1px;width:48px;height:29px;background:#393939;border-left:1px solid #2c2c2c;overflow:hidden"><div class="a" style="left:0;top:26px;width:100%;height:3px;background:#454545"></div></div>
<div class="a" style="left:0;top:1px;width:48px;height:29px;overflow:hidden"><div class="t tabt" style="left:-3px;top:12px">png</div></div>
<div class="a" style="left:48px;top:1px;width:143px;height:29px;background:#393939;border-left:1px solid #2c2c2c;overflow:hidden"><div class="a" style="left:0;top:26px;width:100%;height:3px;background:#454545"></div></div>
<svg style="left:61px;top:12px" width="11" height="14" viewBox="0 0 11 14"><path d="M0.5 0.5H7.5L10.5 3.5V13.5H0.5Z" fill="#26a69a"/><path d="M2 11L4.5 7.5L6.5 9.5L8 8L9.5 11Z" fill="#1b3b38"/><circle cx="4" cy="4.5" r="1.3" fill="#1b3b38"/></svg>
<div class="t tabt" style="left:81px;top:12px">tab-home.png</div>
<div class="a" style="left:191px;top:1px;width:145px;height:29px;background:#393939;border-left:1px solid #2c2c2c;overflow:hidden"><div class="a" style="left:0;top:26px;width:100%;height:3px;background:#454545"></div></div>
<svg style="left:204px;top:12px" width="11" height="14" viewBox="0 0 11 14"><path d="M0.5 0.5H7.5L10.5 3.5V13.5H0.5Z" fill="#26a69a"/><path d="M2 11L4.5 7.5L6.5 9.5L8 8L9.5 11Z" fill="#1b3b38"/><circle cx="4" cy="4.5" r="1.3" fill="#1b3b38"/></svg>
<div class="t tabt" style="left:224px;top:12px">tab-notice.png</div>
<div class="a" style="left:336px;top:1px;width:186px;height:29px;background:#393939;border-left:1px solid #2c2c2c;overflow:hidden"><div class="a" style="left:0;top:26px;width:100%;height:3px;background:#454545"></div></div>
<svg style="left:350px;top:12px" width="11" height="14" viewBox="0 0 11 14"><path d="M0.5 0.5H7.5L10.5 3.5V13.5H0.5Z" fill="#26a69a"/><path d="M2 11L4.5 7.5L6.5 9.5L8 8L9.5 11Z" fill="#1b3b38"/><circle cx="4" cy="4.5" r="1.3" fill="#1b3b38"/></svg>
<div class="t tabt" style="left:370px;top:12px">tab-profile-active.png</div>
<div class="a" style="left:522px;top:1px;width:148px;height:29px;background:#393939;border-left:1px solid #2c2c2c;overflow:hidden"><div class="a" style="left:0;top:26px;width:100%;height:3px;background:#454545"></div></div>
<svg style="left:535px;top:12px" width="11" height="14" viewBox="0 0 11 14"><path d="M0.5 0.5H7.5L10.5 3.5V13.5H0.5Z" fill="#26a69a"/><path d="M2 11L4.5 7.5L6.5 9.5L8 8L9.5 11Z" fill="#1b3b38"/><circle cx="4" cy="4.5" r="1.3" fill="#1b3b38"/></svg>
<div class="t tabt" style="left:555px;top:12px">tab-profile.png</div>
<div class="a" style="left:670px;top:1px;width:182px;height:29px;background:#393939;border-left:1px solid #2c2c2c;overflow:hidden"><div class="a" style="left:0;top:26px;width:100%;height:3px;background:#454545"></div></div>
<svg style="left:682px;top:12px" width="11" height="14" viewBox="0 0 11 14"><path d="M0.5 0.5H7.5L10.5 3.5V13.5H0.5Z" fill="#26a69a"/><path d="M2 11L4.5 7.5L6.5 9.5L8 8L9.5 11Z" fill="#1b3b38"/><circle cx="4" cy="4.5" r="1.3" fill="#1b3b38"/></svg>
<div class="t tabt" style="left:702px;top:12px">tab-repair-active.png</div>
<div class="a" style="left:852px;top:1px;width:121px;height:29px;background:#2e2e2e"><div class="a" style="left:0;top:26px;width:100%;height:3px;background:#454545"></div></div>
<svg style="left:864px;top:13px" width="14" height="12" viewBox="0 0 14 12"><path d="M1 0.5H13.5L12.8 3H1.5L1.2 4.8H12.3L11.3 10L6 11.8L1.3 10.2L1.7 8H4.3L4.1 8.8L6.3 9.5L8.8 8.8L9.1 7.3H0.8Z" fill="#3d9be9"/></svg>
<div class="t" style="left:884px;top:12px;font-size:12.5px;font-style:italic;color:#fff">app.wxss</div>
<svg style="left:953px;top:11px" width="10" height="10" viewBox="0 0 10 10"><path d="M0.5 0.5L9.5 9.5M9.5 0.5L0.5 9.5" stroke="#eee" stroke-width="1.4"/></svg>
<svg style="left:982px;top:10px" width="14" height="12" viewBox="0 0 14 12"><rect x="0.6" y="0.6" width="12.8" height="10.8" fill="none" stroke="#ccc" stroke-width="1.2"/><path d="M7 0.6V11.4" stroke="#ccc" stroke-width="1.2"/></svg>
<svg style="left:1007px;top:14px" width="16" height="4" viewBox="0 0 16 4"><circle cx="1.5" cy="2" r="1.4" fill="#cccccc"/><circle cx="7.0" cy="2" r="1.4" fill="#cccccc"/><circle cx="12.5" cy="2" r="1.4" fill="#cccccc"/></svg></div>
<div id="editor" class="a"><div class="a" style="left:0;top:0;width:1038px;height:22px;background:#2e2e2e"></div>
<svg style="left:17px;top:6px" width="14" height="12" viewBox="0 0 14 12"><path d="M1 0.5H13.5L12.8 3H1.5L1.2 4.8H12.3L11.3 10L6 11.8L1.3 10.2L1.7 8H4.3L4.1 8.8L6.3 9.5L8.8 8.8L9.1 7.3H0.8Z" fill="#3d9be9"/></svg>
<div class="t" style="left:37px;top:5px;font-size:12.5px;color:#bbb">app.wxss</div>
<svg style="left:95px;top:7px" width="6" height="9" viewBox="0 0 6 9"><path d="M0.7 0.7L4.8 4.5L0.7 8.3" fill="none" stroke="#999" stroke-width="1.1"/></svg>
<div class="t" style="left:106px;top:5px;font-size:12.5px;color:#bbb">...</div>
<div class="a" style="left:52px;top:22px;width:971px;height:32px;background:#484848;border-bottom:2px solid #282828"></div>
<div class="t ln" style="top:33px;color:#e0e0e0">1</div>
<div class="t code" style="top:33px"><span style="color:#5fae57">/** <span class="cj" style="letter-spacing:1px;width:96px">全局样式变量</span> */</span></div>
<div class="t ln" style="top:65px;color:#474747">2</div>
<div class="t code" style="top:65px"><span style="color:#d7d7d7">page</span> <span style="color:#e6c34a">{</span></div>
<div class="t ln" style="top:97px;color:#474747">3</div>
<div class="t code" style="top:97px">  <span style="color:#e7a46a">background</span><span style="color:#8fc8f0">:</span> <span class="sw" style="background:#f5f8ff"></span><span style="color:#8fc8f0">#</span><span style="color:#d39b7f">f5f8ff</span><span style="color:#8fc8f0">;</span></div>
<div class="t ln" style="top:129px;color:#474747">4</div>
<div class="t code" style="top:129px"><span style="color:#e6c34a">}</span></div>
<div class="t ln" style="top:161px;color:#474747">5</div>
<div class="t code" style="top:161px"></div>
<div class="t ln" style="top:193px;color:#474747">6</div>
<div class="t code" style="top:193px"><span style="color:#8fc8f0">.</span><span style="color:#7cc0e0">card</span> <span style="color:#e6c34a">{</span></div>
<div class="t ln" style="top:225px;color:#474747">7</div>
<div class="t code" style="top:225px">  <span style="color:#e7a46a">margin</span><span style="color:#8fc8f0">:</span> <span style="color:#ec8b7b">24</span><span style="color:#d7d7d7">rpx</span><span style="color:#8fc8f0">;</span></div>
<div class="t ln" style="top:257px;color:#474747">8</div>
<div class="t code" style="top:257px">  <span style="color:#e7a46a">padding</span><span style="color:#8fc8f0">:</span> <span style="color:#ec8b7b">28</span><span style="color:#d7d7d7">rpx</span><span style="color:#8fc8f0">;</span></div>
<div class="t ln" style="top:289px;color:#474747">9</div>
<div class="t code" style="top:289px">  <span style="color:#e7a46a">border-radius</span><span style="color:#8fc8f0">:</span> <span style="color:#ec8b7b">24</span><span style="color:#d7d7d7">rpx</span><span style="color:#8fc8f0">;</span></div>
<div class="t ln" style="top:321px;color:#474747">10</div>
<div class="t code" style="top:321px">  <span style="color:#e7a46a">background</span><span style="color:#8fc8f0">:</span> <span class="sw" style="background:#ffffff"></span><span style="color:#8fc8f0">#</span><span style="color:#d39b7f">ffffff</span><span style="color:#8fc8f0">;</span></div>
<div class="t ln" style="top:353px;color:#474747">11</div>
<div class="t code" style="top:353px">  <span style="color:#e7a46a">box-shadow</span><span style="color:#8fc8f0">:</span> <span style="color:#ec8b7b">0</span> <span style="color:#ec8b7b">12</span><span style="color:#d7d7d7">rpx</span> <span style="color:#ec8b7b">40</span><span style="color:#d7d7d7">rpx</span> <span class="sw" style="background:rgba(79,141,249,0.12)"></span><span style="color:#d9d99a">rgba</span><span style="color:#c98bd9">(</span><span style="color:#ec8b7b">79</span><span style="color:#8fc8f0">,</span> <span style="color:#ec8b7b">141</span><span style="color:#8fc8f0">,</span> <span style="color:#ec8b7b">249</span><span style="color:#8fc8f0">,</span> <span style="color:#ec8b7b">0.12</span><span style="color:#c98bd9">)</span><span style="color:#8fc8f0">;</span></div>
<div class="t ln" style="top:385px;color:#474747">12</div>
<div class="t code" style="top:385px"><span style="color:#e6c34a">}</span></div>
<div class="t ln" style="top:417px;color:#474747">13</div>
<div class="t code" style="top:417px"></div>
<div class="t ln" style="top:449px;color:#474747">14</div>
<div class="t code" style="top:449px"><span style="color:#8fc8f0">.</span><span style="color:#7cc0e0">title</span> <span style="color:#e6c34a">{</span></div>
<div class="t ln" style="top:481px;color:#474747">15</div>
<div class="t code" style="top:481px">  <span style="color:#e7a46a">font-size</span><span style="color:#8fc8f0">:</span> <span style="color:#ec8b7b">34</span><span style="color:#d7d7d7">rpx</span><span style="color:#8fc8f0">;</span></div>
<div class="t ln" style="top:513px;color:#474747">16</div>
<div class="t code" style="top:513px">  <span style="color:#e7a46a">font-weight</span><span style="color:#8fc8f0">:</span> <span style="color:#ec8b7b">700</span><span style="color:#8fc8f0">;</span></div>
<div class="t ln" style="top:545px;color:#474747">17</div>
<div class="t code" style="top:545px">  <span style="color:#e7a46a">color</span><span style="color:#8fc8f0">:</span> <span class="sw" style="background:#111827"></span><span style="color:#8fc8f0">#</span><span style="color:#d39b7f">111827</span><span style="color:#8fc8f0">;</span></div>
<div class="a" style="left:52px;top:86px;width:1px;height:32px;background:#444"></div>
<div class="a" style="left:52px;top:214px;width:1px;height:160px;background:#444"></div>
<div class="a" style="left:52px;top:470px;width:1px;height:96px;background:#444"></div>
<div class="a" style="left:1023px;top:22px;width:15px;height:553px;background:#2e2e2e;border-left:1px solid #404040"></div>
<div class="a" style="left:1024px;top:22px;width:14px;height:189px;background:#454545"></div></div>
<div id="devtools" class="a"><div class="a" style="left:0;top:0;width:1038px;height:34px;background:#2e2e2e;border-top:1px solid #3a3a3a"></div>
<div class="t" style="left:19px;top:12px;font-size:11.5px;color:#9a9a9a">构建</div>
<div class="t" style="left:100px;top:12px;font-size:11.5px;color:#e8e8e8">调试器</div>
<div class="t" style="left:193px;top:12px;font-size:11.5px;color:#9a9a9a">问题</div>
<div class="t" style="left:239px;top:12px;font-size:11.5px;color:#9a9a9a">输出</div>
<div class="t" style="left:286px;top:12px;font-size:11.5px;color:#9a9a9a">调试控制台</div>
<div class="t" style="left:364px;top:12px;font-size:11.5px;color:#9a9a9a">终端</div>
<div class="t" style="left:410px;top:12px;font-size:11.5px;color:#9a9a9a">代码质量</div>
<div class="a" style="left:52px;top:7px;width:28px;height:21px;border-radius:10.5px;background:#474747;color:#eee;font-size:12px;text-align:center;line-height:21px">258</div>
<div class="a" style="left:145px;top:7px;width:28px;height:21px;border-radius:10.5px;background:#d6433b;color:#fff;font-size:12px;text-align:center;line-height:21px">1,5</div>
<div class="a" style="left:99px;top:28px;width:74px;height:1.5px;background:#ddd"></div>
<svg style="left:983px;top:13px" width="11" height="7" viewBox="0 0 11 7"><path d="M0.7 6.3L5.5 1.2L10.3 6.3" fill="none" stroke="#ccc" stroke-width="1.3"/></svg>
<svg style="left:1009px;top:12px" width="10" height="10" viewBox="0 0 10 10"><path d="M0.5 0.5L9.5 9.5M9.5 0.5L0.5 9.5" stroke="#ccc" stroke-width="1.3"/></svg>
<div class="a" style="left:0;top:34px;width:1038px;height:27px;background:#292929;border-top:1px solid #333;border-bottom:1px solid #3b3b3b"></div>
<svg style="left:9px;top:40px" width="15" height="15" viewBox="0 0 15 15"><path d="M5 12.5H0.7V0.7H12.5V5" fill="none" stroke="#aaa" stroke-width="1.1" stroke-dasharray="none"/><path d="M6.5 6.5L14 9L11 10L14.5 13.5L13.5 14.5L10 11L9 14Z" fill="#aaa"/></svg>
<div class="a" style="left:35px;top:39px;width:1px;height:17px;background:#444"></div>
<div class="a" style="left:226px;top:34px;width:70px;height:27px;background:#000"></div>
<div class="t dt" style="left:53px;top:41px;color:#d6d6d6">Wxml</div>
<div class="t dt" style="left:106px;top:41px;color:#d6d6d6">Console</div>
<div class="t dt" style="left:172px;top:41px;color:#d6d6d6">Sources</div>
<div class="t dt" style="left:237px;top:41px;color:#f0f0f0">Network</div>
<div class="t dt" style="left:306px;top:41px;color:#d6d6d6">Performance</div>
<div class="t dt" style="left:396px;top:41px;color:#d6d6d6">Memory</div>
<div class="t dt" style="left:464px;top:41px;color:#d6d6d6">AppData</div>
<div class="t dt" style="left:534px;top:41px;color:#d6d6d6">Storage</div>
<div class="t dt" style="left:598px;top:41px;color:#d6d6d6">Sensor</div>
<div class="t dt" style="left:657px;top:41px;color:#d6d6d6">Mock</div>
<div class="t dt" style="left:710px;top:41px;color:#d6d6d6">Audits</div>
<div class="t dt" style="left:767px;top:41px;color:#d6d6d6">Vulnerability</div>
<div class="a" style="left:888px;top:41px;width:12px;height:12px;border-radius:6px;background:#e0453c;color:#fff;font-size:9px;font-weight:bold;text-align:center;line-height:12px">×</div>
<div class="t dt" style="left:903px;top:41px">1</div>
<svg style="left:915px;top:40px" width="12" height="12" viewBox="0 0 12 12"><path d="M6 0.5L11.7 11.5H0.3Z" fill="#f2c230"/><path d="M6 4V8" stroke="#222" stroke-width="1.3"/><circle cx="6" cy="9.8" r="0.8" fill="#222"/></svg>
<div class="t dt" style="left:929px;top:41px">5</div>
<div class="a" style="left:947px;top:39px;width:1px;height:17px;background:#444"></div>
<svg style="left:958px;top:40px" width="15" height="15" viewBox="0 0 16 16"><path d="M6.6 0.5H9.4L9.8 2.6L11.3 3.3L13.1 2.1L15 4L13.7 5.8L14.3 7.3L16 7.6V10.4L14.3 10.7L13.7 12.2L15 14L13.1 15.9L11.3 14.7L9.8 15.4L9.4 17.5H6.6" fill="none"/><path d="M8 0.6L9.5 0.9L9.9 2.7L11.4 3.4L12.9 2.4L14.1 3.4L13.3 5L13.9 6.5L15.6 6.9V9.1L13.9 9.5L13.3 11L14.1 12.6L12.9 13.6L11.4 12.6L9.9 13.3L9.5 15.1H6.5L6.1 13.3L4.6 12.6L3.1 13.6L1.9 12.6L2.7 11L2.1 9.5L0.4 9.1V6.9L2.1 6.5L2.7 5L1.9 3.4L3.1 2.4L4.6 3.4L6.1 2.7L6.5 0.9Z" fill="#aaa"/><circle cx="8" cy="8" r="2.6" fill="#292929"/></svg>
<div class="t dt" style="left:991px;top:39px;font-weight:bold;color:#aaa">⋮</div>
<svg style="left:1013px;top:40px" width="16" height="14" viewBox="0 0 16 14"><rect x="0.6" y="3.6" width="11.8" height="9.8" fill="none" stroke="#888" stroke-width="1.2"/><path d="M3.5 3.5V0.6H15.4V10.5H12.5" fill="none" stroke="#888" stroke-width="1.2"/></svg>
<div class="a" style="left:0;top:61px;width:1038px;height:27px;background:#262626;border-bottom:1px solid #3b3b3b"></div>
<div class="a" style="left:9px;top:67px;width:14px;height:14px;border-radius:7px;background:#f0433f"></div>
<svg style="left:37px;top:67px" width="14" height="14" viewBox="0 0 14 14"><circle cx="7" cy="7" r="5.8" fill="none" stroke="#aaa" stroke-width="1.5"/><path d="M3 3L11 11" stroke="#aaa" stroke-width="1.5"/></svg>
<div class="a" style="left:62px;top:66px;width:1px;height:16px;background:#3e3e3e"></div>
<svg style="left:73px;top:68px" width="15" height="13" viewBox="0 0 15 13"><path d="M0.5 0.5H14.5L9 6.5V12.5L6 11V6.5Z" fill="#2776b5"/></svg>
<svg style="left:102px;top:67px" width="14" height="14" viewBox="0 0 14 14"><circle cx="5.5" cy="5.5" r="4.4" fill="none" stroke="#aaa" stroke-width="1.4"/><path d="M8.7 8.7L13.3 13.3" stroke="#aaa" stroke-width="1.6"/></svg>
<div class="a" style="left:127px;top:66px;width:1px;height:16px;background:#3e3e3e"></div>
<div class="a cb" style="left:138px;top:68px"></div>
<div class="t dt" style="left:156px;top:68px">Preserve log</div>
<div class="a cb" style="left:232px;top:68px"></div>
<div class="t dt" style="left:250px;top:68px">Disable cache</div>
<div class="a" style="left:332px;top:66px;width:1px;height:16px;background:#3e3e3e"></div>
<div class="t dt" style="left:342px;top:68px">Online</div>
<svg style="left:403px;top:70px" width="8" height="6"><path d="M0 0H8L4 6Z" fill="#aaa"/></svg>
<div class="a" style="left:423px;top:66px;width:1px;height:16px;background:#3e3e3e"></div>
<svg style="left:437px;top:67px" width="11" height="13" viewBox="0 0 11 13"><path d="M5.5 0.5L10.5 5.5H7.5V10H3.5V5.5H0.5Z M0.5 12H10.5" fill="#aaa" stroke="#aaa" stroke-width="0.8"/></svg>
<svg style="left:465px;top:67px" width="11" height="13" viewBox="0 0 11 13"><path d="M5.5 10.5L10.5 5.5H7.5V0.5H3.5V5.5H0.5Z M0.5 12.3H10.5" fill="#aaa" stroke="#aaa" stroke-width="0.8"/></svg>
<div class="a" style="left:1002px;top:66px;width:1px;height:16px;background:#3e3e3e"></div>
<svg style="left:1014px;top:67px" width="15" height="15" viewBox="0 0 16 16"><path d="M6.6 0.5H9.4L9.8 2.6L11.3 3.3L13.1 2.1L15 4L13.7 5.8L14.3 7.3L16 7.6V10.4L14.3 10.7L13.7 12.2L15 14L13.1 15.9L11.3 14.7L9.8 15.4L9.4 17.5H6.6" fill="none"/><path d="M8 0.6L9.5 0.9L9.9 2.7L11.4 3.4L12.9 2.4L14.1 3.4L13.3 5L13.9 6.5L15.6 6.9V9.1L13.9 9.5L13.3 11L14.1 12.6L12.9 13.6L11.4 12.6L9.9 13.3L9.5 15.1H6.5L6.1 13.3L4.6 12.6L3.1 13.6L1.9 12.6L2.7 11L2.1 9.5L0.4 9.1V6.9L2.1 6.5L2.7 5L1.9 3.4L3.1 2.4L4.6 3.4L6.1 2.7L6.5 0.9Z" fill="#aaa"/><circle cx="8" cy="8" r="2.6" fill="#292929"/></svg>
<div class="a" style="left:0;top:88px;width:1038px;height:25px;background:#262626;border-bottom:1px solid #3b3b3b"></div>
<div class="a" style="left:2px;top:90px;width:166px;height:21px;border:1px solid #1c5184;background:#1f1f1f"></div>
<div class="t dt" style="left:7px;top:95px;color:#bbb">Filter</div>
<div class="a cb" style="left:180px;top:94px"></div>
<div class="t dt" style="left:198px;top:95px">Hide data URLs</div>
<div class="a" style="left:285px;top:91px;width:20px;height:20px;border-radius:5px;background:#5a5a5a"></div>
<div class="t dt" style="left:287px;top:95px;color:#999">All</div>
<div class="a" style="left:309px;top:93px;width:1px;height:15px;background:#3e3e3e"></div>
<div class="t dt" style="left:316px;top:95px">Cloud</div>
<div class="t dt" style="left:358px;top:95px">XHR</div>
<div class="t dt" style="left:390px;top:95px">JS</div>
<div class="t dt" style="left:410px;top:95px">CSS</div>
<div class="t dt" style="left:441px;top:95px">Img</div>
<div class="t dt" style="left:472px;top:95px">Media</div>
<div class="t dt" style="left:515px;top:95px">Font</div>
<div class="t dt" style="left:549px;top:95px">Doc</div>
<div class="t dt" style="left:580px;top:95px">WS</div>
<div class="t dt" style="left:607px;top:95px">Manifest</div>
<div class="t dt" style="left:663px;top:95px">Other</div>
<div class="a cb" style="left:709px;top:94px"></div>
<div class="t dt" style="left:726px;top:95px">Has blocked cookies</div>
<div class="a cb" style="left:845px;top:94px"></div>
<div class="t dt" style="left:862px;top:95px">Blocked Requests</div>
<div class="a" style="left:0;top:113px;width:1038px;height:82px;background:#232323;border-bottom:1px solid #3b3b3b"></div>
<div class="a" style="left:1px;top:115px;width:2px;height:20px;background:#777"></div>
<div class="a" style="left:68.3px;top:113px;width:1px;height:81px;background:#3a3a3a"></div>
<div class="t ovl" style="left:-11.7px;top:118px">500000 ms</div>
<div class="a" style="left:136.5px;top:113px;width:1px;height:81px;background:#3a3a3a"></div>
<div class="t ovl" style="left:56.5px;top:118px">1000000 ms</div>
<div class="a" style="left:204.7px;top:113px;width:1px;height:81px;background:#3a3a3a"></div>
<div class="t ovl" style="left:124.7px;top:118px">1500000 ms</div>
<div class="a" style="left:272.9px;top:113px;width:1px;height:81px;background:#3a3a3a"></div>
<div class="t ovl" style="left:192.9px;top:118px">2000000 ms</div>
<div class="a" style="left:341.1px;top:113px;width:1px;height:81px;background:#3a3a3a"></div>
<div class="t ovl" style="left:261.1px;top:118px">2500000 ms</div>
<div class="a" style="left:409.3px;top:113px;width:1px;height:81px;background:#3a3a3a"></div>
<div class="t ovl" style="left:329.3px;top:118px">3000000 ms</div>
<div class="a" style="left:477.5px;top:113px;width:1px;height:81px;background:#3a3a3a"></div>
<div class="t ovl" style="left:397.5px;top:118px">3500000 ms</div>
<div class="a" style="left:545.7px;top:113px;width:1px;height:81px;background:#3a3a3a"></div>
<div class="t ovl" style="left:465.7px;top:118px">4000000 ms</div>
<div class="a" style="left:613.9px;top:113px;width:1px;height:81px;background:#3a3a3a"></div>
<div class="t ovl" style="left:533.9px;top:118px">4500000 ms</div>
<div class="a" style="left:682.1px;top:113px;width:1px;height:81px;background:#3a3a3a"></div>
<div class="t ovl" style="left:602.1px;top:118px">5000000 ms</div>
<div class="a" style="left:750.3px;top:113px;width:1px;height:81px;background:#3a3a3a"></div>
<div class="t ovl" style="left:670.3px;top:118px">5500000 ms</div>
<div class="a" style="left:818.5px;top:113px;width:1px;height:81px;background:#3a3a3a"></div>
<div class="t ovl" style="left:738.5px;top:118px">6000000 ms</div>
<div class="a" style="left:886.7px;top:113px;width:1px;height:81px;background:#3a3a3a"></div>
<div class="t ovl" style="left:806.7px;top:118px">6500000 ms</div>
<div class="a" style="left:954.9px;top:113px;width:1px;height:81px;background:#3a3a3a"></div>
<div class="t ovl" style="left:874.9px;top:118px">7000000 ms</div>
<div class="a" style="left:1023.1px;top:113px;width:1px;height:81px;background:#3a3a3a"></div>
<div class="t ovl" style="left:943.1px;top:118px">7500000 ms</div>
<div class="a" style="left:1024px;top:149px;width:2px;height:2px;background:#3a8fd9"></div>
<div class="a" style="left:0;top:195px;width:1038px;height:27px;background:#2a2a2a;border-bottom:1px solid #3b3b3b"></div>
<div class="a" style="left:312px;top:195px;width:1px;height:212px;background:#3b3b3b"></div>
<div class="a" style="left:404px;top:195px;width:1px;height:212px;background:#3b3b3b"></div>
<div class="a" style="left:497px;top:195px;width:1px;height:212px;background:#3b3b3b"></div>
<div class="a" style="left:651px;top:195px;width:1px;height:212px;background:#3b3b3b"></div>
<div class="a" style="left:743px;top:195px;width:1px;height:212px;background:#3b3b3b"></div>
<div class="a" style="left:836px;top:195px;width:1px;height:212px;background:#5a5a5a"></div>
<div class="a" style="left:959px;top:222px;width:1px;height:185px;background:#333"></div>
<div class="t dt" style="left:5px;top:202px;color:#ddd">Name</div>
<div class="t dt" style="left:315px;top:202px;color:#ddd">Status</div>
<div class="t dt" style="left:409px;top:202px;color:#ddd">Type</div>
<div class="t dt" style="left:502px;top:202px;color:#ddd">Initiator</div>
<div class="t dt" style="left:657px;top:202px;color:#ddd">Size</div>
<div class="t dt" style="left:748px;top:202px;color:#ddd">Time</div>
<div class="t dt" style="left:841px;top:202px;color:#ddd">Waterfall</div>
<svg style="left:1017px;top:204px" width="9" height="7"><path d="M4.5 0L9 7H0Z" fill="#aaa"/></svg>
<div class="a" style="left:0;top:222px;width:1038px;height:21px;background:#2a2a2a"></div>
<div class="a" style="left:8px;top:226px;width:10px;height:13px;background:#f2f2f2"></div>
<div class="t dt" style="left:24px;top:227px;color:#eee">me</div>
<div class="t dt" style="left:315px;top:227px;color:#eee">200</div>
<div class="t dt" style="left:409px;top:227px;color:#eee">xhr</div>
<div class="t dt" style="left:502px;top:227px;color:#eee;text-decoration:underline">index.js:1</div>
<div class="t dt" style="left:649px;width:90px;text-align:right;top:227px;color:#eee">1.0 kB</div>
<div class="t dt" style="left:742px;width:90px;text-align:right;top:227px;color:#eee">27 ms</div>
<div class="a" style="left:841px;top:226px;width:2px;height:13px;background:#2f9be6"></div>
<div class="a" style="left:0;top:243px;width:1038px;height:21px;background:#242424"></div>
<div class="a" style="left:8px;top:247px;width:10px;height:13px;background:#f2f2f2"></div>
<div class="t dt" style="left:24px;top:248px;color:#eee">list?limit=5</div>
<div class="t dt" style="left:315px;top:248px;color:#eee">200</div>
<div class="t dt" style="left:409px;top:248px;color:#eee">xhr</div>
<div class="t dt" style="left:502px;top:248px;color:#eee;text-decoration:underline">index.js:1</div>
<div class="t dt" style="left:649px;width:90px;text-align:right;top:248px;color:#eee">1.6 kB</div>
<div class="t dt" style="left:742px;width:90px;text-align:right;top:248px;color:#eee">9 ms</div>
<div class="a" style="left:841px;top:247px;width:2px;height:13px;background:#2f9be6"></div>
<div class="a" style="left:0;top:264px;width:1038px;height:21px;background:#2a2a2a"></div>
<div class="a" style="left:8px;top:268px;width:10px;height:13px;background:#f2f2f2"></div>
<div class="t dt" style="left:24px;top:269px;color:#eee">me</div>
<div class="t dt" style="left:315px;top:269px;color:#eee">200</div>
<div class="t dt" style="left:409px;top:269px;color:#eee">xhr</div>
<div class="t dt" style="left:502px;top:269px;color:#eee;text-decoration:underline">index.js:1</div>
<div class="t dt" style="left:649px;width:90px;text-align:right;top:269px;color:#eee">1.0 kB</div>
<div class="t dt" style="left:742px;width:90px;text-align:right;top:269px;color:#eee">8 ms</div>
<div class="a" style="left:1021px;top:268px;width:2px;height:13px;background:#2f9be6"></div>
<div class="a" style="left:0;top:285px;width:1038px;height:21px;background:#242424"></div>
<div class="a" style="left:8px;top:289px;width:10px;height:13px;background:#f2f2f2"></div>
<div class="t dt" style="left:24px;top:290px;color:#eee">me</div>
<div class="t dt" style="left:315px;top:290px;color:#eee">200</div>
<div class="t dt" style="left:409px;top:290px;color:#eee">xhr</div>
<div class="t dt" style="left:502px;top:290px;color:#eee;text-decoration:underline">index.js:1</div>
<div class="t dt" style="left:649px;width:90px;text-align:right;top:290px;color:#eee">1.0 kB</div>
<div class="t dt" style="left:742px;width:90px;text-align:right;top:290px;color:#eee">12 ms</div>
<div class="a" style="left:1021px;top:289px;width:2px;height:13px;background:#2f9be6"></div>
<div class="a" style="left:0;top:306px;width:1038px;height:21px;background:#2a2a2a"></div>
<div class="a" style="left:8px;top:310px;width:10px;height:13px;background:#f2f2f2"></div>
<div class="t dt" style="left:24px;top:311px;color:#eee">list?limit=5</div>
<div class="t dt" style="left:315px;top:311px;color:#eee">200</div>
<div class="t dt" style="left:409px;top:311px;color:#eee">xhr</div>
<div class="t dt" style="left:502px;top:311px;color:#eee;text-decoration:underline">index.js:1</div>
<div class="t dt" style="left:649px;width:90px;text-align:right;top:311px;color:#eee">1.6 kB</div>
<div class="t dt" style="left:742px;width:90px;text-align:right;top:311px;color:#eee">11 ms</div>
<div class="a" style="left:1021px;top:310px;width:2px;height:13px;background:#2f9be6"></div>
<div class="a" style="left:312px;top:222px;width:1px;height:105px;background:#3b3b3b"></div>
<div class="a" style="left:404px;top:222px;width:1px;height:105px;background:#3b3b3b"></div>
<div class="a" style="left:497px;top:222px;width:1px;height:105px;background:#3b3b3b"></div>
<div class="a" style="left:651px;top:222px;width:1px;height:105px;background:#3b3b3b"></div>
<div class="a" style="left:743px;top:222px;width:1px;height:105px;background:#3b3b3b"></div>
<div class="a" style="left:836px;top:222px;width:1px;height:105px;background:#5a5a5a"></div>
<div class="a" style="left:959px;top:222px;width:1px;height:105px;background:#333"></div>
<div class="a" style="left:0;top:407px;width:1038px;height:27px;background:#292a2d;border-top:1px solid #3b3b3b"></div>
<div class="t dt" style="left:11px;top:415px;color:#ddd">5 requests</div>
<div class="a" style="left:75px;top:413px;width:1px;height:16px;background:#3e3e3e"></div>
<div class="t dt" style="left:85px;top:415px;color:#ddd">6.3 kB transferred</div>
<div class="a" style="left:187px;top:413px;width:1px;height:16px;background:#3e3e3e"></div>
<div class="t dt" style="left:196px;top:415px;color:#ddd">5.0 kB resources</div></div>
<div id="status" class="a">
<svg style="left:16px;top:8px" width="12" height="12" viewBox="0 0 12 12"><circle cx="6" cy="6" r="5.4" fill="none" stroke="#9a9a9a" stroke-width="1.1"/><path d="M3.8 3.8L8.2 8.2M8.2 3.8L3.8 8.2" stroke="#9a9a9a" stroke-width="1.1"/></svg>
<div class="t" style="left:31px;top:8px;font-size:12px;color:#9a9a9a">0</div>
<svg style="left:41px;top:7px" width="13" height="12" viewBox="0 0 13 12"><path d="M6.5 0.8L12.3 11.3H0.7Z" fill="none" stroke="#9a9a9a" stroke-width="1.1"/><path d="M6.5 4.3V7.8M6.5 9V10" stroke="#9a9a9a" stroke-width="1.1"/></svg>
<div class="t" style="left:58px;top:8px;font-size:12px;color:#9a9a9a">0</div>
<div class="t" style="left:985px;top:8px;font-size:12px;color:#8a8a8a"><span class="cj" style="width:1em">行</span> 1<span class="cj" style="width:1em">，</span><span class="cj" style="width:1em">列</span> 1</div>
<div class="t" style="left:1056px;top:8px;font-size:12px;color:#8a8a8a"><span class="cj" style="width:2em">空格</span>: 4</div>
<div class="t" style="left:1109px;top:8px;font-size:12px;color:#8a8a8a">UTF-8</div>
<div class="t" style="left:1157px;top:8px;font-size:12px;color:#8a8a8a">LF</div>
<div class="t" style="left:1182px;top:8px;font-size:12px;color:#8a8a8a">{} CSS</div>
<div class="t" style="left:1040px;top:-4px;font-family:'Liberation Serif',serif;font-size:17px;font-weight:bold;font-style:italic;color:#ff0000;-webkit-text-stroke:0.6px #ff0000;letter-spacing:3.2px;transform:scaleY(0.95);transform-origin:0 0">www.java1234.com</div>
</div>
<div class="a" style="left:691px;top:666px;width:1px;height:434px;background:#454545"></div>
<div class="a" style="left:0;top:0;width:1729px;height:1128px;border:1px solid #56705a;border-radius:7px;pointer-events:none"></div>
<svg style="left:0;top:0" width="1729" height="1128"><path d="M0 0H8A8 8 0 0 0 0 8Z" fill="#1d7a20"/><path d="M1729 0H1721A8 8 0 0 1 1729 8Z" fill="#1d7a20"/><path d="M0 1128H8A8 8 0 0 1 0 1120Z" fill="#1d7a20"/><path d="M1729 1128H1721A8 8 0 0 0 1729 1120Z" fill="#d8d8d8"/></svg>
</body></html>
